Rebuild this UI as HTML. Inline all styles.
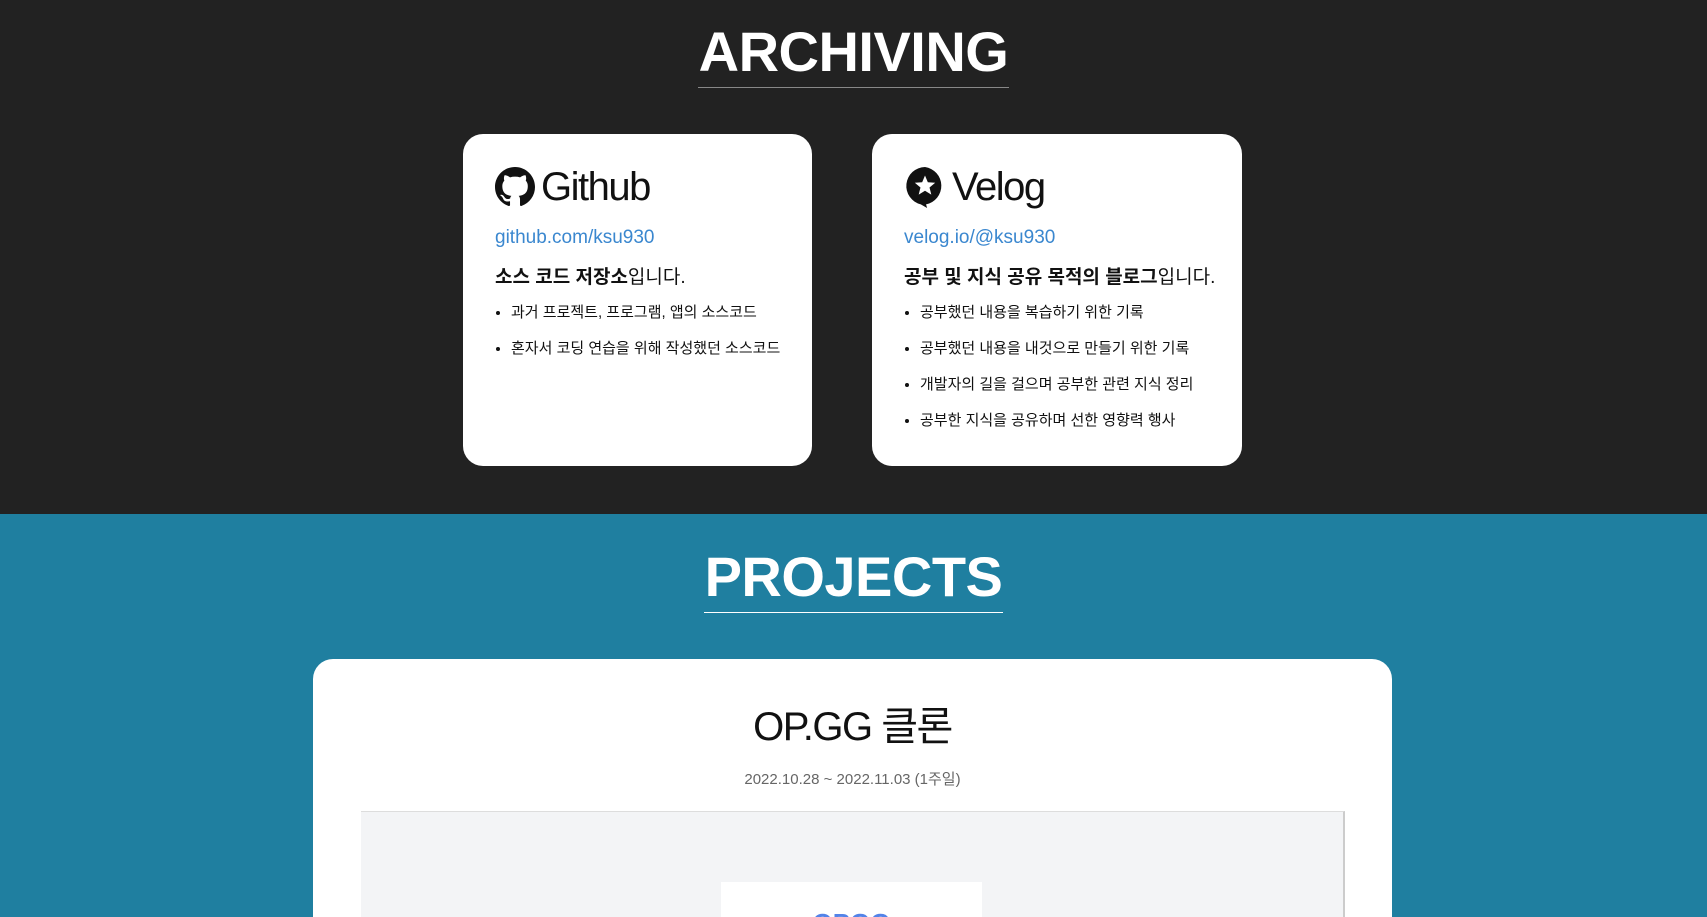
<!DOCTYPE html>
<html><head><meta charset="utf-8"><style>
*{margin:0;padding:0;box-sizing:border-box}
html,body{width:1707px;height:917px;overflow:hidden}
body{font-family:"Liberation Sans","Noto Sans CJK KR",sans-serif;background:#1f7fa0;position:relative}
.dark{position:absolute;left:0;top:0;width:1707px;height:514px;background:#222}
.title{position:absolute;left:0;width:1707px;text-align:center;color:#fff;font-weight:bold;font-size:56px;letter-spacing:-0.5px}
.title span{display:inline-block;border-bottom:1px solid #888;padding:0 1px 3px}
.card{position:absolute;background:#fff;border-radius:20px;top:134px;height:332px;padding:32px 0 0 32px}
.head{display:flex;align-items:center;font-size:40px;color:#111;letter-spacing:-1.5px;height:42px}
.head svg{margin-right:6px}
.link{color:#3a87cf;font-size:19px;margin-top:19px}
.desc{font-size:19px;margin-top:13px;color:#111}
.desc b{font-weight:bold}
ul{margin-top:14px;padding-left:16px;font-size:15px;color:#111}
li{height:36px;line-height:20px}
.proj{position:absolute;left:313px;top:659px;width:1079px;height:258px;background:#fff;border-radius:20px 20px 0 0;overflow:hidden}
.pt{position:absolute;left:0;width:100%;text-align:center}
.img{position:absolute;left:48px;top:152px;width:984px;height:106px;background:#f3f4f6;border-top:1px solid #ddd;border-right:2px solid #ccc;overflow:hidden}
.inner{position:absolute;left:360px;top:70px;width:261px;height:100px;background:#fff;text-align:center;color:#5383e8;font-weight:bold;font-size:26px;padding-top:26px}
</style></head><body>
<div class="dark"></div>
<div class="title" style="top:19px"><span>ARCHIVING</span></div>
<div class="card" style="left:463px;width:349px">
 <div class="head"><svg width="40" height="40" viewBox="0 0 16 16"><path fill="#111" d="M8 0C3.58 0 0 3.58 0 8c0 3.54 2.29 6.53 5.47 7.59.4.07.55-.17.55-.38 0-.19-.01-.82-.01-1.49-2.01.37-2.53-.49-2.690-.94-.09-.23-.48-.94-.82-1.13-.28-.15-.68-.52-.01-.53.63-.01 1.08.58 1.23.82.72 1.21 1.87.87 2.33.66.07-.52.28-.87.51-1.07-1.78-.2-3.64-.89-3.64-3.95 0-.87.31-1.59.82-2.15-.08-.2-.36-1.02.08-2.12 0 0 .67-.21 2.2.82.64-.18 1.32-.27 2-.27.68 0 1.36.09 2 .27 1.53-1.04 2.2-.82 2.2-.82.44 1.1.16 1.92.08 2.12.51.56.82 1.27.82 2.15 0 3.07-1.87 3.75-3.65 3.95.29.25.54.73.54 1.48 0 1.07-.01 1.93-.01 2.2 0 .21.15.46.55.38A8.013 8.013 0 0016 8c0-4.42-3.58-8-8-8z"/></svg>Github</div>
 <div class="link">github.com/ksu930</div>
 <div class="desc"><b>소스 코드 저장소</b>입니다.</div>
 <ul><li>과거 프로젝트, 프로그램, 앱의 소스코드</li><li>혼자서 코딩 연습을 위해 작성했던 소스코드</li></ul>
</div>
<div class="card" style="left:872px;width:370px">
 <div class="head"><svg width="42" height="42" viewBox="0 0 40 40"><path fill="#111" d="M20 1a18 18 0 0 0-4 35.5l6 3.5-1-3.5A18 18 0 0 0 20 1z"/><path fill="#fff" d="M20 9l2.7 6.5 7 .5-5.4 4.5 1.7 6.8L20 23.6l-6 3.7 1.7-6.8L10.3 16l7-.5z"/></svg>Velog</div>
 <div class="link">velog.io/@ksu930</div>
 <div class="desc"><b>공부 및 지식 공유 목적의 블로그</b>입니다.</div>
 <ul><li>공부했던 내용을 복습하기 위한 기록</li><li>공부했던 내용을 내것으로 만들기 위한 기록</li><li>개발자의 길을 걸으며 공부한 관련 지식 정리</li><li>공부한 지식을 공유하며 선한 영향력 행사</li></ul>
</div>
<div class="title" style="top:544px"><span style="border-bottom-color:#fff">PROJECTS</span></div>
<div class="proj">
 <div class="pt" style="top:35px;font-size:40px;color:#111;letter-spacing:-1.5px">OP.GG 클론</div>
 <div class="pt" style="top:109px;font-size:15px;color:#666">2022.10.28 ~ 2022.11.03 (1주일)</div>
 <div class="img"><div class="inner">OPGG</div></div>
</div>
</body></html>
